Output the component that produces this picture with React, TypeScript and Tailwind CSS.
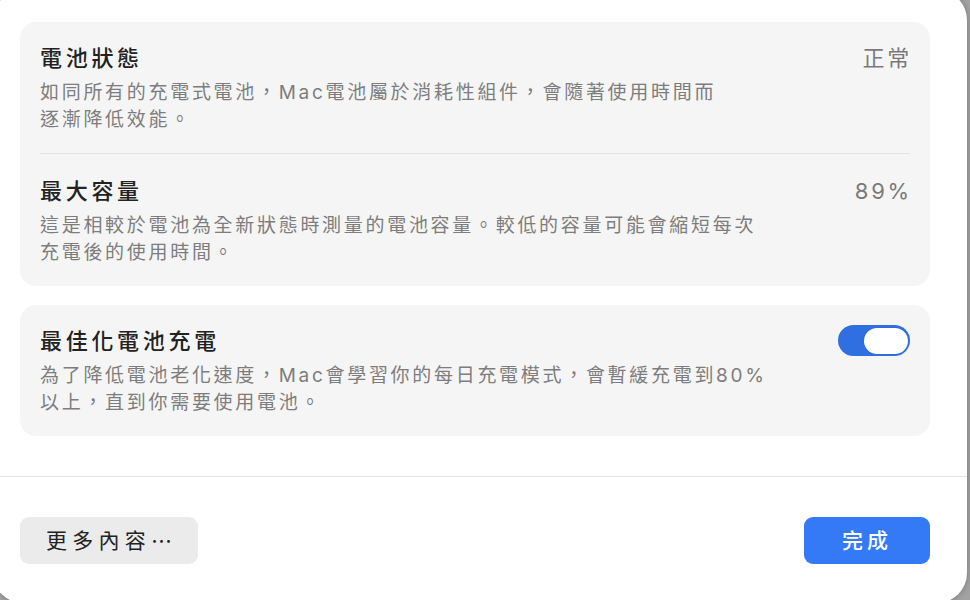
import { ReactNode } from 'react';

// ─── Rows ────────────────────────────────────────────────────────────────────

function SettingText({ title, lines }: { title: string; lines: string[] }) {
	return (
		<div className="flex flex-col">
			<span className="text-[22px] leading-[31px] font-medium tracking-[3.7px] text-[#222222]">
				{title}
			</span>
			<span className="mt-[5px] text-[19px] leading-[27px] tracking-[2.7px] text-[#7d7d7d] whitespace-nowrap">
				{lines.map((l, i) => (
					<span key={i} className="block">
						{l}
					</span>
				))}
			</span>
		</div>
	);
}

function ValueRow({ title, lines, value }: { title: string; lines: string[]; value: ReactNode }) {
	return (
		<div className="flex items-start justify-between">
			<SettingText title={title} lines={lines} />
			<span className="text-[22px] leading-[31px] tracking-[2.8px] -mr-[2px] text-[#7a7a7a]">{value}</span>
		</div>
	);
}

function Toggle() {
	return (
		<div className="w-[72px] h-[31px] rounded-full bg-[#2f6fe2] flex items-center justify-end pr-[2px] mt-[-1px]">
			<div className="w-[44px] h-[26px] rounded-full bg-white shadow-[0_0_1px_rgba(0,0,0,0.2)]" />
		</div>
	);
}

// ─── Main ────────────────────────────────────────────────────────────────────

export default function App() {
	return (
		<div
			className="w-[970px] h-[600px] overflow-hidden bg-[#a2a2a2]"
			style={{ fontFamily: 'Inter, "Noto Sans CJK TC", sans-serif' }}
		>
			<div className="-mt-[10px] -ml-[7px] w-[974px] h-[613px] rounded-[30px] bg-white flex flex-col shadow-[0_0_6px_rgba(0,0,0,0.25)]">
				{/* Settings cards */}
				<div className="pt-[32px] pl-[27px] pr-[37px] pb-[40px] flex flex-col gap-[19px]">
					<div className="rounded-[16px] bg-[#f5f5f5] px-[20px]">
						<div className="pt-[21px] pb-[20px] border-b border-[#e3e3e3]">
							<ValueRow
								title="電池狀態"
								lines={['如同所有的充電式電池，Mac電池屬於消耗性組件，會隨著使用時間而', '逐漸降低效能。']}
								value="正常"
							/>
						</div>
						<div className="pt-[22px] pb-[20px]">
							<ValueRow
								title="最大容量"
								lines={['這是相較於電池為全新狀態時測量的電池容量。較低的容量可能會縮短每次', '充電後的使用時間。']}
								value="89%"
							/>
						</div>
					</div>

					<div className="rounded-[16px] bg-[#f5f5f5] px-[20px] pt-[21px] pb-[20px]">
						<div className="flex items-start justify-between">
							<SettingText
								title="最佳化電池充電"
								lines={['為了降低電池老化速度，Mac會學習你的每日充電模式，會暫緩充電到80%', '以上，直到你需要使用電池。']}
							/>
							<Toggle />
						</div>
					</div>
				</div>

				{/* Footer */}
				<div className="border-t border-[#e4e4e4] pt-[40px] pl-[27px] pr-[37px] flex justify-between">
					<button className="h-[47px] w-[178px] rounded-[9px] bg-[#ebebeb] text-[21px] tracking-[5.2px] text-[#222222] flex items-center justify-center">
						更多內容<span className="font-['Noto_Sans_CJK_TC'] tracking-[0px]">⋯</span>
					</button>
					<button className="h-[47px] w-[126px] rounded-[9px] bg-[#3479f5] text-[21px] tracking-[4px] text-white font-medium flex items-center justify-center">
						完成
					</button>
				</div>
			</div>
		</div>
	);
}
